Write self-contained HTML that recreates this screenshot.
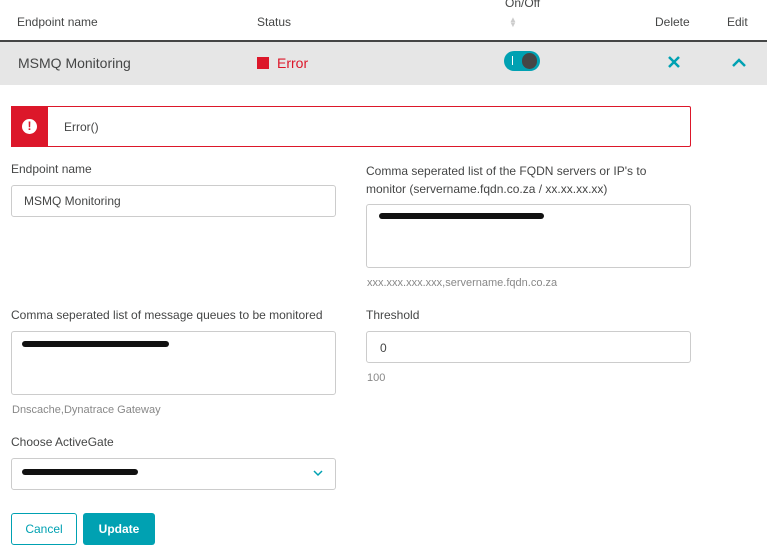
<!DOCTYPE html>
<html><head><style>
body{margin:0;width:781px;height:558px;background:#fff;font-family:"Liberation Sans",sans-serif;color:#454646;position:relative;overflow:hidden}
.a{position:absolute}
.lbl{font-size:12px;color:#454646}
.inp{position:absolute;border:1px solid #ccc;border-radius:3px;background:#fff;box-sizing:border-box}
.scr{position:absolute;height:6px;background:#111;border-radius:4px}
.hint{font-size:11px;color:#888}
</style></head><body>
<div class="a lbl" style="left:17px;top:15px">Endpoint name</div>
<div class="a lbl" style="left:257px;top:15px">Status</div>
<div class="a lbl" style="left:505px;top:-4px">On/Off</div>
<div class="a" style="left:509px;top:17px;font-size:8px;color:#ccc;line-height:5px">▲<br>▼</div>
<div class="a lbl" style="left:655px;top:15px">Delete</div>
<div class="a lbl" style="left:727px;top:15px">Edit</div>
<div class="a" style="left:0;top:40px;width:767px;height:2px;background:#454646"></div>
<div class="a" style="left:0;top:42px;width:767px;height:43px;background:#e6e6e6"></div>
<div class="a" style="left:18px;top:55px;font-size:14px;color:#454646">MSMQ Monitoring</div>
<div class="a" style="left:257px;top:57px;width:12px;height:12px;background:#dc172a"></div>
<div class="a" style="left:277px;top:55px;font-size:14px;color:#dc172a">Error</div>
<div class="a" style="left:504px;top:51px;width:36px;height:20px;border-radius:10px;background:#00a1b2"></div>
<div class="a" style="left:512px;top:56px;width:1px;height:9px;background:#fff"></div>
<div class="a" style="left:522px;top:53px;width:15px;height:16px;border-radius:8px;background:#454646"></div>
<svg class="a" style="left:667px;top:55px" width="14" height="14"><path d="M2 2L12 12M12 2L2 12" stroke="#00a1b2" stroke-width="2.5"/></svg>
<svg class="a" style="left:731px;top:58px" width="16" height="10"><path d="M2 8L8 2L14 8" stroke="#00a1b2" stroke-width="2.5" fill="none"/></svg>
<div class="a" style="left:11px;top:106px;width:680px;height:41px;border:1px solid #dc172a;border-radius:2px;box-sizing:border-box"></div>
<div class="a" style="left:11px;top:106px;width:37px;height:41px;background:#dc172a"></div>
<div class="a" style="left:22px;top:119px;width:15px;height:15px;border-radius:50%;background:#fff;color:#dc172a;font-size:12px;font-weight:bold;text-align:center;line-height:15px">!</div>
<div class="a" style="left:64px;top:120px;font-size:12px">Error()</div>
<div class="a lbl" style="left:11px;top:162px">Endpoint name</div>
<div class="inp" style="left:11px;top:185px;width:325px;height:32px"></div>
<div class="a" style="left:24px;top:194px;font-size:12px">MSMQ Monitoring</div>
<div class="a lbl" style="left:366px;top:162px;line-height:18px">Comma seperated list of the FQDN servers or IP's to<br>monitor (servername.fqdn.co.za / xx.xx.xx.xx)</div>
<div class="inp" style="left:366px;top:204px;width:325px;height:64px"></div>
<div class="scr" style="left:379px;top:213px;width:165px"></div>
<div class="a hint" style="left:367px;top:277px">xxx.xxx.xxx.xxx,servername.fqdn.co.za</div>
<div class="a lbl" style="left:11px;top:308px">Comma seperated list of message queues to be monitored</div>
<div class="inp" style="left:11px;top:331px;width:325px;height:64px"></div>
<div class="scr" style="left:22px;top:341px;width:147px"></div>
<div class="a hint" style="left:12px;top:404px">Dnscache,Dynatrace Gateway</div>
<div class="a lbl" style="left:366px;top:308px">Threshold</div>
<div class="inp" style="left:366px;top:331px;width:325px;height:32px"></div>
<div class="a" style="left:380px;top:341px;font-size:12px">0</div>
<div class="a hint" style="left:367px;top:372px">100</div>
<div class="a lbl" style="left:11px;top:435px">Choose ActiveGate</div>
<div class="inp" style="left:11px;top:458px;width:325px;height:32px"></div>
<div class="scr" style="left:22px;top:469px;width:116px"></div>
<svg class="a" style="left:313px;top:470px" width="10" height="7"><path d="M1 1L5 5L9 1" stroke="#00a1b2" stroke-width="1.5" fill="none"/></svg>
<div class="a" style="left:11px;top:513px;width:66px;height:32px;border:1px solid #00a1b2;border-radius:3px;box-sizing:border-box;text-align:center;line-height:30px;font-size:12px;color:#00a1b2">Cancel</div>
<div class="a" style="left:83px;top:513px;width:72px;height:32px;background:#00a1b2;border-radius:3px;text-align:center;line-height:32px;font-size:12px;color:#fff;font-weight:bold">Update</div>
</body></html>
